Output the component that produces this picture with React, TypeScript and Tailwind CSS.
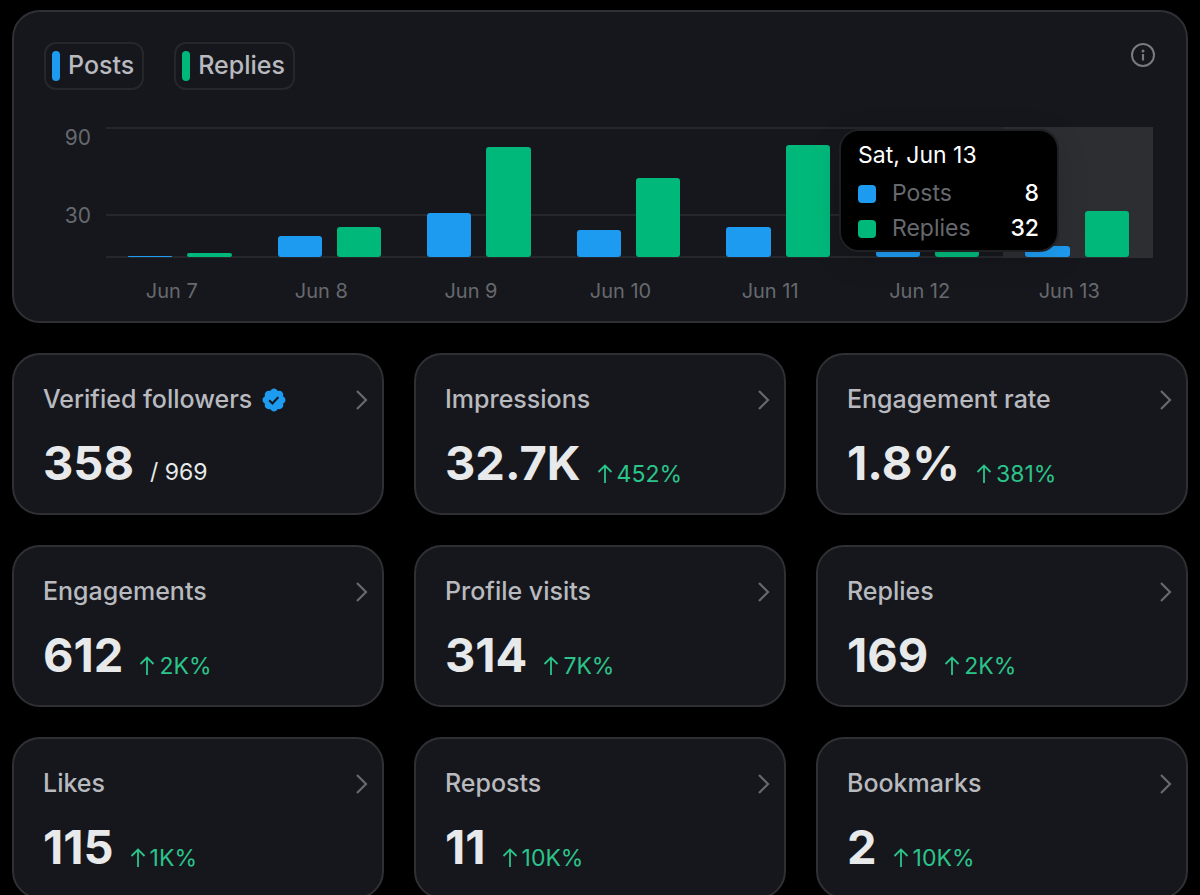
import React from "react";

type Day = { label: string; posts: number; replies: number };

const days: Day[] = [
  { label: "Jun 7", posts: 1, replies: 3 },
  { label: "Jun 8", posts: 15, replies: 21 },
  { label: "Jun 9", posts: 31, replies: 77 },
  { label: "Jun 10", posts: 19, replies: 55 },
  { label: "Jun 11", posts: 21, replies: 78 },
  { label: "Jun 12", posts: 5, replies: 5 },
  { label: "Jun 13", posts: 8, replies: 32 },
];

const MAX = 90;
const activeDay = "Jun 13";

type Metric = {
  title: string;
  value: string;
  change?: string;
  total?: string;
  verified?: boolean;
};

const metrics: Metric[] = [
  { title: "Verified followers", value: "358", total: "969", verified: true },
  { title: "Impressions", value: "32.7K", change: "452%" },
  { title: "Engagement rate", value: "1.8%", change: "381%" },
  { title: "Engagements", value: "612", change: "2K%" },
  { title: "Profile visits", value: "314", change: "7K%" },
  { title: "Replies", value: "169", change: "2K%" },
  { title: "Likes", value: "115", change: "1K%" },
  { title: "Reposts", value: "11", change: "10K%" },
  { title: "Bookmarks", value: "2", change: "10K%" },
];

function VerifiedBadge() {
  return (
    <svg viewBox="1.25 1.25 21.5 21.5" className="size-6 shrink-0" aria-label="Verified">
      <path
        fill="#1d9bf0"
        d="M22.25 12c0-1.43-.88-2.67-2.19-3.34.46-1.39.2-2.9-.81-3.91s-2.52-1.27-3.91-.81c-.66-1.31-1.91-2.19-3.34-2.19s-2.67.88-3.33 2.19c-1.4-.46-2.91-.2-3.92.81s-1.26 2.52-.8 3.91c-1.31.67-2.2 1.91-2.2 3.34s.89 2.67 2.2 3.34c-.46 1.39-.21 2.9.8 3.91s2.52 1.26 3.91.81c.67 1.31 1.91 2.19 3.34 2.19s2.68-.88 3.34-2.19c1.39.45 2.9.2 3.91-.81s1.27-2.52.81-3.91c1.31-.67 2.19-1.91 2.19-3.34z"
      />
      <path d="M7.7 12.3l2.9 2.9 5.3-5.8" fill="none" stroke="#16171c" strokeWidth="1.9" />
    </svg>
  );
}

function InfoIcon() {
  return (
    <svg viewBox="0 0 24 24" className="size-6" fill="none" aria-hidden="true">
      <circle cx="12" cy="12" r="11" stroke="#777a80" strokeWidth="2" />
      <circle cx="12" cy="8" r="1.5" fill="#777a80" />
      <path d="M12 11v6.5" stroke="#777a80" strokeWidth="2.2" />
    </svg>
  );
}

function Chevron() {
  return (
    <svg viewBox="0 0 12 20" className="h-5 w-3 shrink-0" fill="none" aria-hidden="true">
      <path d="M1 1l9 9-9 9" stroke="#66696e" strokeWidth="2.2" />
    </svg>
  );
}

function ArrowUp() {
  return (
    <svg viewBox="0 0 16 20" className="h-5 w-4" fill="none" aria-hidden="true">
      <path d="M8 19V2M1.5 8L8 1.5 14.5 8" stroke="#2bc48a" strokeWidth="1.8" />
    </svg>
  );
}

function LegendButton({ label, color }: { label: string; color: string }) {
  return (
    <button
      type="button"
      className="flex h-12 items-center gap-2 rounded-xl border-2 border-[#26272b] pr-2 pl-1.5 text-[25px] font-medium text-[#b8babf]"
    >
      <span className={`h-[30px] w-2 rounded ${color}`} />
      {label}
    </button>
  );
}

function TooltipRow({ label, value, color }: { label: string; value: number; color: string }) {
  return (
    <div className="flex h-[35px] items-center text-[23px]">
      <span className={`mr-4 size-[18px] rounded ${color}`} />
      <span className="flex-1 text-[#66696e]">{label}</span>
      <span className="font-medium text-white">{value}</span>
    </div>
  );
}

function Bar({ value, color }: { value: number; color: string }) {
  return (
    <div
      className={`flex-1 rounded-[3px] ${color}`}
      style={{ height: `${(value / MAX) * 100}%` }}
    />
  );
}

function ActivityChart() {
  return (
    <section className="rounded-[28px] border-2 border-[#2f3034] bg-[#16171c] px-[30px] pt-[30px] pb-3.5">
      <div className="flex items-start justify-between pr-px">
        <div className="flex gap-[30px]">
          <LegendButton label="Posts" color="bg-[#1d9bf0]" />
          <LegendButton label="Replies" color="bg-[#00b87a]" />
        </div>
        <button type="button" aria-label="About this chart" className="mt-px">
          <InfoIcon />
        </button>
      </div>

      <div className="mt-[37px] flex pr-[3px]">
        <div className="-mt-[5px] flex w-[62px] flex-col gap-[46px] pr-[15px] text-right text-[21px] leading-8 text-[#66696e]">
          <span>90</span>
          <span>30</span>
        </div>
        <div className="flex-1">
          <div className="relative h-[131px] border-y-2 border-[#26272b]">
            <div className="absolute inset-x-0 top-2/3 h-0.5 bg-[#26272b]" />
            <div className="relative -mt-0.5 flex h-[131px]">
              {days.map((d) => (
                <div
                  key={d.label}
                  className={`flex flex-1 items-end gap-[15px] pt-px pr-6 pb-px pl-[22px] ${
                    d.label === activeDay ? "bg-[#2d2e32]" : ""
                  }`}
                >
                  <Bar value={d.posts} color="bg-[#1d9bf0]" />
                  <Bar value={d.replies} color="bg-[#00b87a]" />
                </div>
              ))}
            </div>
            <div className="absolute top-0 right-[94px] w-[220px] rounded-[20px] border-2 border-[#1f2023] bg-black pt-2 pr-[18px] pb-1 pl-[17px] shadow-[0_8px_32px_rgba(0,0,0,0.12)]">
              <div className="h-[37px] text-[23px] leading-8 text-white">Sat, Jun 13</div>
              <TooltipRow label="Posts" value={8} color="bg-[#1d9bf0]" />
              <TooltipRow label="Replies" value={32} color="bg-[#00b87a]" />
            </div>
          </div>
          <div className="mt-[17px] flex">
            {days.map((d) => (
              <div key={d.label} className="flex-1 pr-[18px] text-center text-xl leading-8 text-[#66696e]">
                {d.label}
              </div>
            ))}
          </div>
        </div>
      </div>
    </section>
  );
}

function MetricCard({ title, value, change, total, verified }: Metric) {
  return (
    <a
      href="#"
      className="block h-[162px] rounded-[28px] border-2 border-[#2f3034] bg-[#16171c] pt-[29px] pl-[29px]"
    >
      <div className="flex h-8 items-center justify-between pr-3.5">
        <h2 className="flex items-center gap-2.5 text-[25px] font-medium text-[#b8babf]">
          {title}
          {verified && <VerifiedBadge />}
        </h2>
        <Chevron />
      </div>
      <div className="mt-[23px] flex items-end gap-4">
        <span className="text-[47px] leading-[48px] font-bold text-[#e7e9ea]">{value}</span>
        {total && <span className="text-[23px] leading-[30px] text-[#e7e9ea]">/ {total}</span>}
        {change && (
          <span className="flex items-center gap-1 text-[23px] leading-[26px] text-[#2bc48a]">
            <ArrowUp />
            {change}
          </span>
        )}
      </div>
    </a>
  );
}

export default function App() {
  return (
    <main className="h-screen overflow-hidden bg-black px-3 pt-2.5 font-['Inter',sans-serif]">
      <ActivityChart />
      <div className="mt-[30px] grid grid-cols-3 gap-[30px]">
        {metrics.map((m) => (
          <MetricCard key={m.title} {...m} />
        ))}
      </div>
    </main>
  );
}
